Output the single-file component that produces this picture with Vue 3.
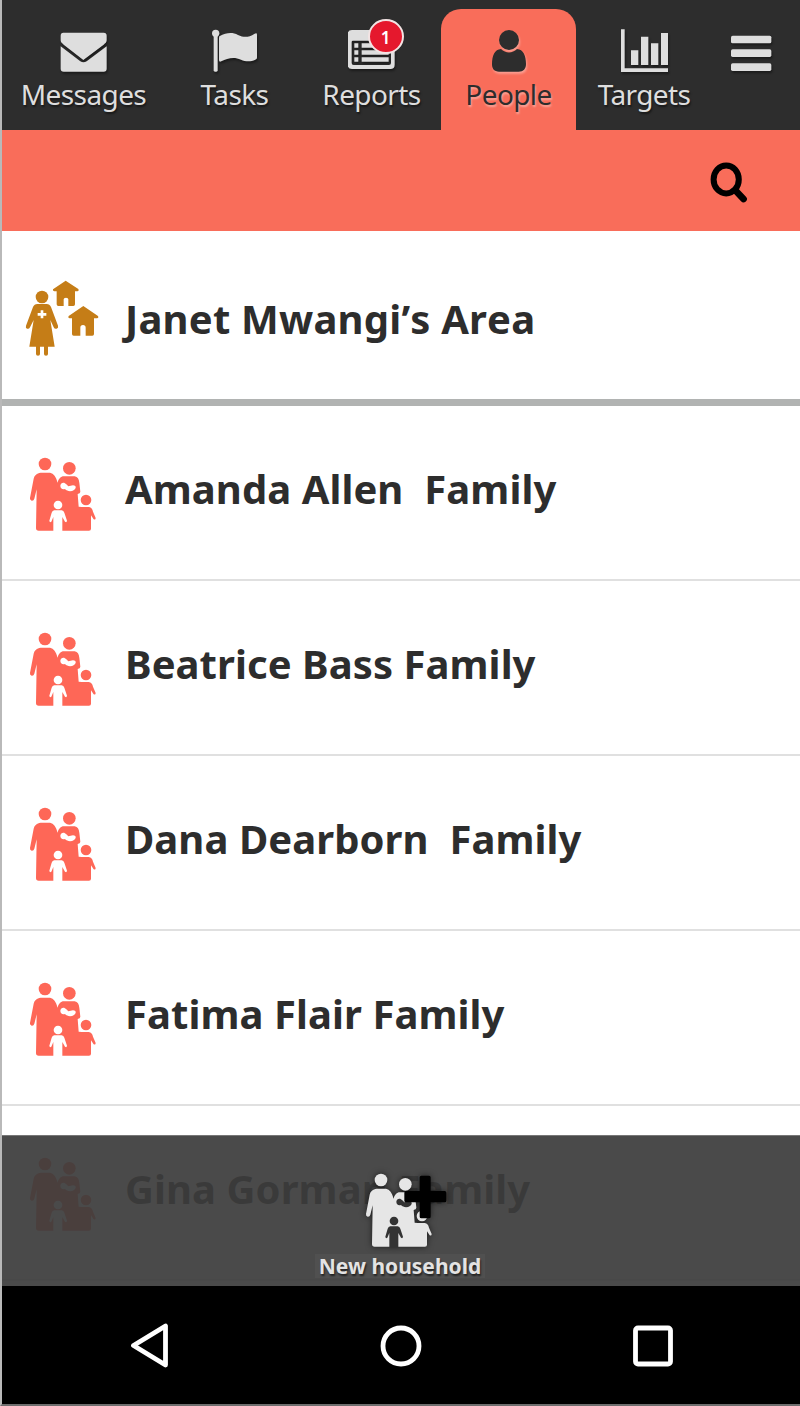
<template>
  <div class="screen">
    <nav class="tabs">
      <button
        v-for="tab in tabs"
        :key="tab.id"
        class="tab"
        :class="['tab-' + tab.id, { 'is-active': tab.id === activeTab }]"
        @click="activeTab = tab.id"
      >
        <span class="tab-icon">
          <svg v-if="tab.id === 'messages'" width="48" height="43" viewBox="180 87 144 129">
            <path d="M190 98h121q9 0 9 9v14c0 6-4 9-9 13l-61 46-59-46c-5-4-9-7-9-13v-14q0-9 8-9z" />
            <path d="M182 139l59 45q9 6 19 0l60-45v67q0 9-9 9H191q-9 0-9-9z" />
          </svg>
          <svg v-else-if="tab.id === 'tasks'" width="48" height="43" viewBox="634 87 144 129">
            <circle cx="648" cy="100" r="11" />
            <path d="M642 104h12v107q0 4-4 4h-4q-4 0-4-4z" />
            <path d="M659 109c22-11 38-13 56-4 18 8 31 8 50-4q7-4 7 3v68c0 5-2 6-5 7-14 7-30 6-43 0-22-10-41-4-59 5q-7 3-7-4v-64q0-4 1-7z" />
          </svg>
          <svg v-else-if="tab.id === 'reports'" width="48" height="43" viewBox="234 87 144 129">
            <path
              fill-rule="evenodd"
              d="M246 90h115q13 0 13 13v91q0 13-13 13H246q-13 0-13-13v-91q0-13 13-13zM249 122q-4 0-4 4v63q0 6 6 6h106q6 0 6-6v-63q0-4-4-4z"
            />
            <path d="M253 130h12v13h-12zM253 151h12v13h-12zM253 172h12v13h-12zM275 130h81v13h-81zM275 151h81v13h-81zM275 172h81v13h-81z" />
          </svg>
          <svg v-else-if="tab.id === 'people'" width="48" height="43" viewBox="645 87 144 129">
            <circle cx="717" cy="120" r="30" />
            <path d="M693 147c14 14 34 14 48 0 19 1 27 21 27 45 0 15-8 23-22 23h-59c-14 0-21-8-21-22 0-26 8-45 27-46z" />
          </svg>
          <svg v-else-if="tab.id === 'targets'" width="48" height="43" viewBox="240 87 144 129">
            <path d="M243 88h11v117h131v11H243zM273 151h22v44h-22zM303 110h22v85h-22zM333 130h22v65h-22zM363 99h22v96h-22z" />
          </svg>
          <svg v-else width="48" height="43" viewBox="560 87 144 129">
            <rect x="572" y="107" width="121" height="23" rx="5" />
            <rect x="572" y="148" width="121" height="23" rx="5" />
            <rect x="572" y="190" width="121" height="23" rx="5" />
          </svg>
          <span v-if="tab.badge" class="badge">{{ tab.badge }}</span>
        </span>
        <span v-if="tab.label" class="tab-label">{{ tab.label }}</span>
      </button>
    </nav>

    <div class="search-bar">
      <button class="search-btn" aria-label="Search">
        <svg width="38" height="42" viewBox="0 0 38 42">
          <ellipse cx="16.2" cy="18.4" rx="12.6" ry="14" fill="none" stroke="#000" stroke-width="6" />
          <path d="M25.5 29.5l8 8.5" stroke="#000" stroke-width="6.8" stroke-linecap="round" />
        </svg>
      </button>
    </div>

    <main class="content">
      <div class="row area-row">
        <svg class="area-icon" width="74" height="76" viewBox="75 60 222 228">
          <circle cx="126" cy="111" r="19" />
          <path d="M112 132h28q9 0 13 9l21 56q2 7-4 9-6 2-9-4l-10-22 13 80h-20v22q0 5-6 5t-6-5v-22h-12v22q0 5-6 5t-6-5v-22H88l13-80-11 22q-3 6-9 4-5-2-3-9l21-56q4-9 13-9z" />
          <path d="M122 151h8v8h9v8h-9v8h-8v-8h-9v-8h9z" class="hole" />
          <path d="M197 62l38 25q3 6-3 7h-7v39q0 5-5 5h-15v-20q0-5-7-5t-7 5v20h-16q-5 0-5-5V94h-7q-6-1-4-6z" />
          <path d="M250 138l44 30q3 6-3 7h-9v47q0 5-5 5h-20v-24q0-8-8-8t-8 8v24h-20q-5 0-5-5v-47h-7q-6-1-3-7z" />
        </svg>
        <span class="row-title">{{ areaName }}</span>
      </div>

      <div v-for="name in households" :key="name" class="row">
        <svg class="family-icon" width="70" height="76" viewBox="84 48 210 228">
          <use href="#family" />
        </svg>
        <span class="row-title">{{ name }}</span>
      </div>

      <div class="action-bar">
        <button class="action">
          <svg class="action-icon" width="84" height="76" viewBox="84 48 252 228">
            <use href="#family" />
            <path class="plus" d="M256 59h23q5 0 5 5v41h42q5 0 5 5v24q0 5-5 5h-42v43q0 5-5 5h-23q-5 0-5-5v-43h-41q-5 0-5-5v-24q0-5 5-5h41V64q0-5 5-5z" />
          </svg>
          <span class="action-label">New household</span>
        </button>
      </div>
    </main>

    <footer class="system-nav">
      <svg width="42" height="46" viewBox="0 0 42 46">
        <path d="M5.5 22.5L37.5 3v39z" />
      </svg>
      <svg width="42" height="46" viewBox="0 0 42 46">
        <circle cx="21" cy="23" r="18" />
      </svg>
      <svg width="42" height="46" viewBox="0 0 42 46">
        <rect x="3.5" y="5" width="35" height="36" rx="2.5" />
      </svg>
    </footer>

    <!-- shared shapes -->
    <svg class="defs" width="0" height="0">
      <symbol id="family" viewBox="84 48 210 228" x="84" y="48" width="210" height="228">
        <circle cx="135" cy="72" r="19" />
        <path d="M122 98h28c11 2 18 12 23 30 2-10 6-15 15-19h36c9 2 13 8 14 19l3 27q0 5-8 7l3 38 10 1h20c8 1 11 6 13 14l8 19q0 6-6 4l-8-12v40q0 6-6 6H116q-8 0-8-8l2-116-7 28q-2 7-8 6-6-2-5-8l11-58c3-11 9-16 21-18z" />
        <circle cx="208" cy="85" r="19" />
        <circle cx="258" cy="180" r="16" />
        <path class="hole" d="M181 137c1-10 12-12 18-4l6 6 14-3c10 0 11 9 3 14-9 6-21 4-27-3-8 3-14-2-14-10z" />
        <circle class="hole" cx="174" cy="195" r="13" />
        <path class="hole" d="M163 211h22q6 1 8 7l8 24q-1 7-6 3l-8-14v43h-27v-43l-6 14q-5 4-6-3l7-24q2-6 8-7z" />
      </symbol>
    </svg>
  </div>
</template>

<script setup>
import { ref } from 'vue'

const activeTab = ref('people')

const tabs = [
  { id: 'messages', label: 'Messages' },
  { id: 'tasks', label: 'Tasks' },
  { id: 'reports', label: 'Reports', badge: 1 },
  { id: 'people', label: 'People' },
  { id: 'targets', label: 'Targets' },
  { id: 'menu' }
]

const areaName = 'Janet Mwangi’s Area'

const households = [
  'Amanda Allen  Family',
  'Beatrice Bass Family',
  'Dana Dearborn  Family',
  'Fatima Flair Family',
  'Gina Gorman Family'
]
</script>

<style>
body {
  margin: 0;
  background: #fff;
}
</style>

<style scoped>
.screen {
  box-sizing: border-box;
  width: 800px;
  height: 1406px;
  display: flex;
  flex-direction: column;
  border-left: 2px solid #b9b9b9;
  border-bottom: 2px solid #6e6e6e;
  font-family: 'Noto Sans', 'Open Sans', sans-serif;
  overflow: hidden;
}

button {
  border: none;
  padding: 0;
  margin: 0;
  background: transparent;
  font-family: inherit;
  cursor: pointer;
}

.tabs {
  height: 130px;
  flex-shrink: 0;
  box-sizing: border-box;
  padding-top: 9px;
  display: grid;
  grid-template-columns: 163px 139px 137px 135px 136px 78px;
  background: #2d2d2d;
}

.tab {
  display: flex;
  flex-direction: column;
  align-items: center;
  padding-top: 20px;
  color: #dedede;
}

.tab-reports {
  padding-right: 2px;
}

.tab.is-active {
  background: #f96d5a;
  color: #2d2d2d;
  border-radius: 20px 20px 0 0;
}

.tab-icon {
  position: relative;
  height: 43px;
}

.tab-icon svg {
  display: block;
  fill: currentColor;
  filter: drop-shadow(1px 2px 1px rgba(0, 0, 0, 0.4));
}

.is-active .tab-icon svg {
  filter: drop-shadow(1px 2px 1px rgba(255, 255, 255, 0.35));
}

.tab-label {
  margin-top: 4px;
  font-size: 28px;
  letter-spacing: -0.6px;
  line-height: 36px;
  text-shadow: 1px 2px 2px rgba(0, 0, 0, 0.5);
}

.is-active .tab-label {
  text-shadow: 1px 2px 2px rgba(255, 255, 255, 0.4);
}

.badge {
  position: absolute;
  left: 20px;
  top: -10px;
  width: 32px;
  height: 31px;
  border: 2px solid #f3e4e4;
  border-radius: 50%;
  background: #e5182d;
  color: #fff;
  font-size: 17px;
  font-weight: 600;
  line-height: 33px;
  text-align: center;
}

.search-bar {
  height: 101px;
  flex-shrink: 0;
  display: flex;
  align-items: center;
  justify-content: flex-end;
  padding-right: 52px;
  box-sizing: border-box;
  background: #f96d5a;
}

.search-btn svg {
  display: block;
  margin-top: 3px;
}

.content {
  position: relative;
  flex: 1;
  overflow: hidden;
  background: #fff;
}

.row {
  box-sizing: border-box;
  height: 175px;
  display: flex;
  align-items: center;
  padding: 0 0 5px 26px;
  border-bottom: 2px solid #e0e0e0;
}

.area-row {
  padding: 0 0 0 23px;
  border-bottom: 7px solid #b1b3b2;
}

.row-title {
  margin: 0 0 2px 27px;
  font-size: 40px;
  letter-spacing: 0.06px;
  line-height: 54px;
  font-weight: 700;
  color: #2d2d2d;
  white-space: pre;
}

.area-row .row-title {
  margin: 8px 0 0 26px;
  font-kerning: none;
  letter-spacing: 0.2px;
}

.area-icon {
  fill: #c57d17;
  margin-top: 6px;
}

.family-icon {
  fill: #fe6757;
  margin-top: 8px;
  --hole: #fff;
}

.hole {
  fill: var(--hole, #fff);
}

.action-bar {
  position: absolute;
  left: 0;
  right: 0;
  bottom: 0;
  height: 151px;
  box-sizing: border-box;
  display: flex;
  justify-content: center;
  padding: 36px 2px 0 0;
  border-top: 1px solid #777;
  background: rgba(59, 59, 59, 0.924);
}

.action {
  display: flex;
  flex-direction: column;
  align-items: center;
}

.action-icon {
  margin-left: 12px;
  fill: #e6e6e6;
  filter: drop-shadow(0 0 3px rgba(0, 0, 0, 0.6));
  --hole: #333;
}

.plus {
  fill: #000;
}

.action-label {
  margin-top: 6px;
  padding: 0 4px;
  background: #505050;
  color: #e3e3e3;
  font-size: 21px;
  line-height: 24px;
  font-weight: 700;
  text-shadow: 1px 2px 2px rgba(0, 0, 0, 0.6);
}

.system-nav {
  height: 118px;
  flex-shrink: 0;
  box-sizing: border-box;
  padding-top: 2px;
  display: flex;
  align-items: center;
  justify-content: center;
  gap: 210px;
  background: #000;
}

.system-nav svg {
  fill: none;
  stroke: #fff;
  stroke-width: 4.8;
  stroke-linejoin: round;
}

.defs {
  position: absolute;
}
</style>
